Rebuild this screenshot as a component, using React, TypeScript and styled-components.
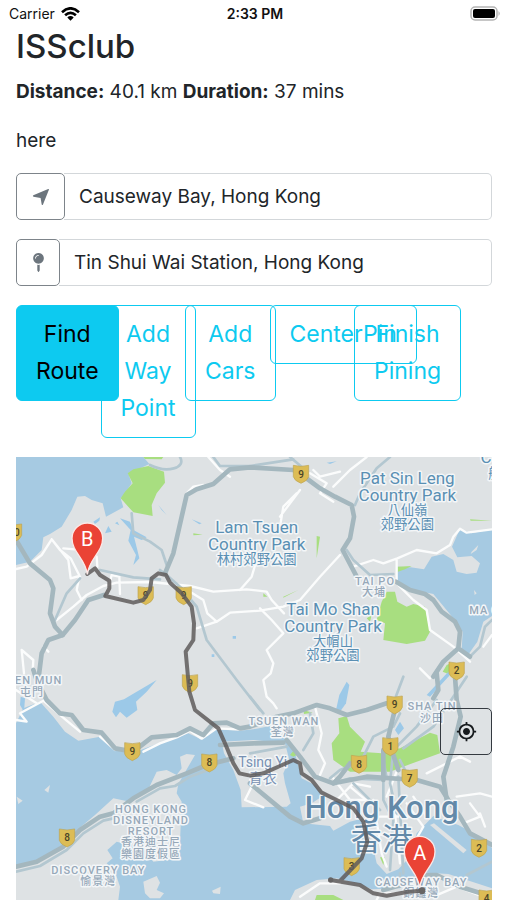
import React from "react";
import styled, { createGlobalStyle } from "styled-components";
import { FaMapPin } from "react-icons/fa";
import { MdMyLocation } from "react-icons/md";

const GlobalStyle = createGlobalStyle`
  * { box-sizing: border-box; }
  body {
    margin: 0;
    background: #fff;
    color: #212529;
    font-family: Inter, "Noto Sans CJK TC", sans-serif;
    font-size: 19px;
    line-height: 29px;
  }
`;

const Page = styled.div`
  min-height: 100vh;
  display: flex;
  flex-direction: column;
`;

const StatusBar = styled.header`
  display: grid;
  grid-template-columns: 1fr auto 1fr;
  align-items: center;
  height: 27px;
  padding: 0 6px 0 9px;
  font-size: 14px;
  line-height: 20px;
  color: #111;
`;

const Carrier = styled.span`
  display: flex;
  align-items: center;
  gap: 6px;
`;

const Clock = styled.time`
  font-weight: 600;
`;

const Battery = styled.svg`
  justify-self: end;
`;

const Content = styled.main`
  flex: 1;
  display: flex;
  flex-direction: column;
  padding: 0 15px 0 16px;
`;

const Title = styled.h1`
  margin: 0 0 12px;
  font-size: 33px;
  line-height: 38px;
  font-weight: 500;
`;

const Line = styled.p<{ $last?: boolean }>`
  margin: 0 0 ${(p) => (p.$last ? 18 : 20)}px;

  b { font-weight: 700; }
`;

const Field = styled.div`
  display: flex;
  height: 47px;
  margin-bottom: 19px;
`;

const FieldButton = styled.button<{ $wide?: boolean }>`
  flex: none;
  display: flex;
  align-items: center;
  justify-content: center;
  width: ${(p) => (p.$wide ? 49 : 44)}px;
  padding: 0;
  border: 1px solid #7d848a;
  border-radius: 5px;
  background: #fff;
  color: #6c757d;
`;

const FieldInput = styled.input`
  flex: 1;
  min-width: 0;
  margin-left: -1px;
  padding: 0 15px;
  border: 1px solid #d3d7da;
  border-left-width: 0;
  border-radius: 0 5px 5px 0;
  background: transparent;
  color: #212529;
  font: inherit;
`;

const Actions = styled.div`
  display: grid;
  grid-template-columns: repeat(6, minmax(0, 1fr));
  align-items: start;
  margin: 0 -15px 19px -16px;
`;

const ActionCell = styled.div`
  padding-left: 16px;
`;

const ActionButton = styled.button<{ $solid?: boolean }>`
  position: relative;
  z-index: ${(p) => (p.$solid ? 1 : 0)};
  display: block;
  width: min-content;
  padding: 10px 19px;
  border: 1px solid #0dcaf0;
  border-radius: 6px;
  background: ${(p) => (p.$solid ? "#0dcaf0" : "transparent")};
  color: ${(p) => (p.$solid ? "#000" : "#0dcaf0")};
  font: inherit;
  font-size: 23px;
  line-height: 37px;
`;

const MapFrame = styled.section`
  position: relative;
  flex: 1;
  display: flex;
  min-height: 443px;
  overflow: hidden;
  background: #dfe2e4;
`;

const MapDrawing = styled.svg`
  flex: 1;
  min-width: 0;
  height: 443px;
  font-family: Roboto, "Noto Sans CJK TC", sans-serif;
`;

const LocateButton = styled.button`
  position: absolute;
  top: 251px;
  right: 0;
  display: flex;
  align-items: center;
  justify-content: center;
  width: 52px;
  height: 47px;
  padding: 0;
  border: 1px solid #343a40;
  border-radius: 5px;
  background: transparent;
  color: #161a1d;
`;

const PlaceName = styled.text`
  text-anchor: middle;
  paint-order: stroke;
  stroke: #f3f6f8;
  stroke-width: 9px;
  stroke-linejoin: round;
`;

const ParkName = styled(PlaceName)`
  fill: #5a8fb3;
  font-size: 51px;
`;

const ParkNameHan = styled(PlaceName)`
  fill: #5a8fb3;
  font-size: 40px;
`;

const TownName = styled(PlaceName)`
  fill: #96a8b8;
  font-size: 33px;
  font-weight: 500;
  letter-spacing: 3px;
`;

const CityName = styled(PlaceName)`
  fill: #6389a8;
  font-size: 93px;
  font-weight: 500;
`;

const CityNameHan = styled(CityName)`
  font-weight: 400;
`;

const IslandName = styled(PlaceName)`
  fill: #7891b3;
  font-size: 42px;
`;

const ShieldNumber = styled.text`
  text-anchor: middle;
  fill: #4b4528;
  font-size: 30px;
  font-weight: 500;
`;

const MarkerLetter = styled.text`
  text-anchor: middle;
  fill: #fff;
  font-size: 60px;
`;

const shields = [
  { x: 903, y: 72, n: "9" },
  { x: 1370, y: 662, n: "2" },
  { x: 437, y: 436, n: "9" },
  { x: 551, y: 436, n: "9" },
  { x: 570, y: 700, n: "9" },
  { x: 397, y: 904, n: "9" },
  { x: 628, y: 938, n: "8" },
  { x: 201, y: 1163, n: "8" },
  { x: 1184, y: 764, n: "9" },
  { x: 1171, y: 889, n: "1" },
  { x: 1077, y: 942, n: "8" },
  { x: 1229, y: 984, n: "7" },
  { x: 1437, y: 1194, n: "2" },
  { x: 1055, y: 1249, n: "3" },
  { x: 1460, y: 1346, n: "4" },
  { x: 42, y: 248, n: "10" },
];

const parks = [
  { x: 1222, y: 102, lines: ["Pat Sin Leng", "Country Park"], han: ["八仙嶺", "郊野公園"] },
  { x: 770, y: 248, lines: ["Lam Tsuen", "Country Park"], han: ["林村郊野公園"] },
  { x: 999, y: 495, lines: ["Tai Mo Shan", "Country Park"], han: ["大帽山", "郊野公園"] },
];

const towns = [
  { x: 1125, y: 404, t: "TAI PO" },
  { x: 1122, y: 438, t: "大埔" },
  { x: 1468, y: 492, t: "MA ON" },
  { x: 92, y: 703, t: "TUEN MUN" },
  { x: 96, y: 738, t: "屯門" },
  { x: 852, y: 824, t: "TSUEN WAN" },
  { x: 848, y: 857, t: "荃灣" },
  { x: 1296, y: 781, t: "SHA TIN" },
  { x: 1296, y: 817, t: "沙田" },
  { x: 453, y: 1088, t: "HONG KONG" },
  { x: 453, y: 1121, t: "DISNEYLAND" },
  { x: 453, y: 1154, t: "RESORT" },
  { x: 453, y: 1188, t: "香港迪士尼" },
  { x: 453, y: 1223, t: "樂園度假區" },
  { x: 295, y: 1273, t: "DISCOVERY BAY" },
  { x: 295, y: 1306, t: "愉景灣" },
  { x: 1264, y: 1308, t: "CAUSEWAY BAY" },
  { x: 1264, y: 1342, t: "銅鑼灣" },
];

const water = [
  "M48 21H430L448 42 410 60 385 70 395 100 375 130 362 145 370 172 318 200 308 160 275 150 255 138 232 140 215 180 185 230 150 252 130 262 125 300 90 335 48 345Z",
  "M48 820L70 775 120 755 160 800 195 845 235 872 300 860 345 900 400 908 470 882 520 868 565 850 600 866 640 838 720 842 760 838 810 828 855 862 885 910 905 985 950 1008 965 1040 935 1060 900 1070 910 1120 990 1128 1000 1142 1050 1115 1090 1105 1120 1195 1130 1240 1160 1272 1195 1258 1230 1220 1250 1150 1300 1098 1330 1110 1375 1125 1440 1160 1476 1195V1350H48Z",
  "M1192 350L1232 352 1272 358 1295 320 1330 312 1360 330 1370 365 1400 372 1430 368 1440 340 1415 318 1372 322 1356 290 1380 236 1415 250 1476 238V498L1450 515 1432 575 1406 612 1385 600 1388 545 1352 495 1300 432 1230 418 1188 392Z",
];

const lakes = [
  "M337 785L345 755 372 748 410 725 470 690 440 725 408 755 412 780 380 803 360 785 348 802Z",
  "M1008 780L1018 735 1040 695 1048 705 1038 760 1020 785Z",
  "M315 250L325 228 335 245ZM345 220L352 215 358 226ZM280 215L300 202 298 212 285 222ZM698 558H708V566H698ZM635 613H643V621H635Z",
  "M390 215L400 240 440 262 425 270 402 260 412 300 418 325 400 345 408 315 385 272 392 240 360 205Z",
  "M62 740L75 745 72 785 60 765Z",
  "M575 208L605 220 598 223ZM475 165L500 195 485 180Z",
  "M980 38L1010 34 990 42Z",
  "M1280 735L1345 665 1350 675 1290 740ZM1185 840L1200 815 1212 835 1195 855Z",
];

const land = [
  "M48 1252L110 1235 180 1195 225 1145 285 1095 340 1045 390 1055 440 1028 470 965 500 960 530 975 545 955 540 920 560 912 585 915 562 955 535 1002 530 1030 545 1055 538 1225 460 1235 430 1195 350 1175 322 1200 338 1225 320 1240 345 1265 360 1310 355 1350H48Z",
  "M665 875L760 870 855 880 868 930 850 970 855 1000 872 1060 860 1070 725 1072 722 1020 700 960 672 910Z",
  "M1476 1315V1350H870L885 1320 950 1290 1010 1285 1080 1302 1115 1318 1200 1315 1220 1285 1280 1268 1345 1272 1400 1290Z",
  "M1290 1125L1302 1120 1400 1200 1390 1210Z",
  "M430 1295L470 1278 480 1298 470 1320 492 1330 480 1345 450 1345 435 1330ZM636 1322L662 1310 660 1332 640 1330ZM133 1020L150 1005 145 1028ZM50 1040L68 1052 55 1062Z",
  "M1415 305L1435 285 1430 300 1412 312ZM1422 420L1430 430 1424 435Z",
];

const greens = [
  "M400 58L445 48 492 65 495 98 470 130 455 165 458 198 400 187 362 145 375 125 398 100 383 70Z",
  "M430 21H490L485 28 435 27Z",
  "M1145 455L1160 425 1185 425 1192 455 1220 470 1240 462 1275 470 1290 545 1275 572 1220 582 1150 570 1155 520 1130 510Z",
  "M1015 805L1040 798 1050 830 1095 875 1082 905 1145 910 1200 895 1290 848 1312 855 1320 910 1250 935 1170 965 1050 965 1000 930 995 880 1018 850Z",
  "M1192 350L1235 348 1215 358 1192 366ZM1328 665L1340 645 1352 640 1345 672Z",
  "M950 258L960 260 950 325ZM850 440L895 420 850 443ZM580 250L608 254 580 256ZM1410 208L1476 212 1412 212ZM870 915L880 903 890 915 880 920ZM950 1335L1000 1335 1030 1350H945ZM1140 1222L1155 1222 1150 1245ZM1100 505L1115 495 1110 515ZM790 430L802 440H790ZM910 780L938 788 912 792Z",
];

const streets = [
  "M48 357L80 350 125 315 155 268 205 330 212 385 238 378M155 268L180 300 212 325 240 380M190 295L225 298M238 380L230 420 245 450",
  "M170 510L220 470 260 435 310 408 350 398 450 396 570 408 640 425 740 418 800 425 815 450 852 490M290 320L292 350M330 395L335 375 358 380 360 432",
  "M720 420L755 380 770 330M570 425L610 450 622 490 650 515 590 535M650 515L690 488 780 482 850 470 900 450 960 380 1020 315M780 475L815 510 850 550 800 600 820 640 812 670 790 690 800 740 820 760 830 775",
  "M890 130L850 170 840 230M900 120L840 200M1000 110L1050 60 1100 21M930 70L980 100 960 130 1000 155M940 60L960 80 1020 65M625 21L660 60 690 80",
  "M560 130L580 110 610 105",
  "M1060 350L1120 330 1150 340 1192 325 1250 300 1310 310 1350 285 1360 260 1380 236 1400 248 1476 238M1190 330L1190 400 1240 450 1280 480 1290 540 1360 590 1410 635",
  "M65 600L100 630 98 665M65 600L72 670M130 590L145 605M48 720L110 760M48 810L80 815 60 790 130 752 200 812 240 845",
  "M300 860L345 900M430 905L480 880 530 862 570 842 605 866 650 835 720 838",
  "M790 970L760 1000 735 1050 790 1072M750 990L780 1005",
  "M945 770L965 850 955 900 975 940 960 975M1190 965L1160 1040M1280 970L1380 920 1410 935M1370 1040L1440 1030 1476 1040M1410 1060L1440 1100 1390 1120M1120 1050L1145 1210 1160 1250M1180 1040L1200 1240M1220 1060L1270 1130 1230 1200M1240 1040L1280 1100M1140 1100H1230M1130 1150L1240 1180M1050 1010L1110 1060M1440 1090L1455 1130",
  "M900 1340L960 1300 1020 1300M1130 1350L1140 1330 1260 1330M1300 1340L1370 1310 1476 1350M1450 590L1476 555M1260 655L1290 685",
  "M1010 1050L1060 1000 1110 1010M1000 985L1050 1050 1110 1050",
];

const minorRoads = [
  "M240 385L200 430 165 510M300 360L400 382 480 388M480 360L500 375 540 410 590 470 620 570 710 690 780 780",
  "M500 345L485 300 450 275 400 250 395 190M540 21C560 55 500 70 450 45M640 21L660 48H750",
  "M750 48L880 28M870 21L910 55M1170 21L1130 55 1080 130 1065 165M1040 300L1060 330 1110 375 1180 372M1410 620L1440 590 1455 530 1476 510",
  "M750 910L860 890M750 740L790 790M930 790L940 850 910 900M1400 680L1340 770 1300 830 1210 895M1210 680L1180 760M1310 750L1250 830 1180 900 1170 1000 1190 1090",
  "M1000 1000L1050 985 1150 990M990 985L1020 960 1060 945M1150 930L1160 985M1200 930L1230 990M1090 920L1120 860 1180 830 1200 790",
  "M1150 985L1150 1050 1180 1110 1170 1260M1195 980L1210 1270M1060 1000L1140 1080M1476 1235L1400 1275M1200 1270V1300",
  "M48 1265L120 1248 200 1200 250 1150 310 1112 340 1105M410 1055L480 1015 525 1008 570 980 630 958",
];

const highways = [
  "M48 270L90 340 150 390 160 415 150 490 165 530 188 555 225 510 265 450 312 435",
  "M115 690L125 610 145 570 188 555",
  "M495 370L520 310 545 200 560 135 590 118 640 102 690 58 750 52 880 60 910 78 960 115 1005 140 1055 165 1062 200 1050 265 1028 300 1070 380",
  "M1188 395L1230 420 1275 432 1300 450 1325 485 1365 515 1380 545 1375 595 1410 620M1375 595L1330 635 1300 680",
  "M100 660L110 690 140 750 180 790 215 795 250 840 305 848 345 895 400 905 455 862 530 855 570 835 610 855 640 820 680 818 720 835 750 830 830 800 880 790 950 765 990 775 1040 795 1100 780 1160 760",
  "M660 885L760 880 850 878M48 1250L110 1235 190 1190 240 1140 300 1100 340 1090 400 1045 470 1005 560 970 620 945 700 925",
  "M750 1000L870 1100 910 1120 960 1105M860 870L900 920 945 980 1000 1000 1100 980 1250 990 1320 1010 1345 1050 1380 1100 1410 1150 1476 1185",
  "M1310 670L1315 720 1300 745M1365 680L1370 750M1182 790L1165 860 1175 900 1195 960M1370 750L1382 800 1360 890 1330 980 1340 1050M1050 940L1020 980 1000 1000M1150 900L1150 990",
  "M1150 1320L1220 1300 1260 1275 1310 1275 1380 1310 1476 1340",
];

const route =
  "M262 372L285 355 300 375 328 392 328 415 316 438 400 458 430 450 450 420 455 385 475 370 498 375 510 398 545 430 575 470 582 520 580 570 557 605 563 670 568 725 585 780 655 835 675 880 700 940 718 970 750 977 790 970 840 948 880 930 900 940 905 970 935 990 965 1028 1010 1050 1060 1075 1090 1115 1102 1175 1085 1225 1020 1293M992 1290L1080 1305 1120 1330 1160 1337 1225 1325 1266 1322";

function Roads({ paths, color, width }: { paths: string[]; color: string; width: number }) {
  return (
    <g fill="none" stroke={color} strokeWidth={width} strokeLinejoin="round" strokeLinecap="round">
      {paths.map((d) => <path key={d} d={d} />)}
    </g>
  );
}

function Shapes({ paths, color }: { paths: string[]; color: string }) {
  return <g fill={color}>{paths.map((d) => <path key={d} d={d} />)}</g>;
}

function Marker({ x, y, letter }: { x: number; y: number; letter: string }) {
  return (
    <g transform={`translate(${x} ${y})`}>
      <path d="M0 108C-6 60-46 42-46 0A46 46 0 0 1 46 0C46 42 6 60 0 108Z" fill="#ea4335" stroke="#fbe9e7" strokeWidth="4" />
      <MarkerLetter y="24">{letter}</MarkerLetter>
    </g>
  );
}

function RouteMap() {
  return (
    <MapDrawing viewBox="48 21 1428 1329" preserveAspectRatio="xMidYMid slice" role="img" aria-label="Route map of Hong Kong">
      <rect x="-1000" y="0" width="4000" height="1400" fill="#dee2e4" />
      <Shapes paths={water} color="#a6cae2" />
      <Shapes paths={land} color="#dee2e4" />
      <Shapes paths={greens} color="#a8de80" />
      <Shapes paths={lakes} color="#9cc9e8" />
      <Roads paths={streets} color="#fbfcfc" width={7} />
      <Roads paths={minorRoads} color="#b3c7d0" width={8} />
      <Roads paths={highways} color="#a4b7be" width={14} />
      {shields.map((s) => (
        <g key={`${s.x}-${s.y}`} transform={`translate(${s.x} ${s.y})`}>
          <path d="M-23-26Q0-20 23-26V8Q20 20 0 28Q-20 20-23 8Z" fill="#dcbc55" stroke="#bda553" strokeWidth="2" />
          <ShieldNumber y="11">{s.n}</ShieldNumber>
        </g>
      ))}
      {towns.map((t) => <TownName key={t.t} x={t.x} y={t.y}>{t.t}</TownName>)}
      {parks.map((p) => (
        <g key={p.lines[0]}>
          {p.lines.map((l, i) => <ParkName key={l} x={p.x} y={p.y + i * 51}>{l}</ParkName>)}
          {p.han.map((l, i) => <ParkNameHan key={l} x={p.x} y={p.y + 43 + (p.lines.length - 1) * 51 + i * 40}>{l}</ParkNameHan>)}
        </g>
      ))}
      <ParkName x="1588" y="40">Country Park</ParkName>
      <ParkNameHan x="1505" y="84">船灣</ParkNameHan>
      <IslandName x="788" y="950">Tsing Yi</IslandName>
      <IslandName x="788" y="998">青衣</IslandName>
      <CityName x="1145" y="1105">Hong Kong</CityName>
      <CityNameHan x="1145" y="1200">香港</CityNameHan>
      <path d={route} fill="none" stroke="#5f5c5c" strokeOpacity="0.85" strokeWidth="12" strokeLinejoin="round" strokeLinecap="round" />
      <circle cx="992" cy="1290" r="8" fill="#666464" />
      <circle cx="1266" cy="1322" r="10" fill="#666464" />
      <Marker x={262} y={265} letter="B" />
      <Marker x={1259} y={1205} letter="A" />
    </MapDrawing>
  );
}

const actions = ["Find Route", "Add Way Point", "Add Cars", "CenterPin", "Finish Pining"];

export default function App() {
  return (
    <>
      <GlobalStyle />
      <Page>
        <StatusBar>
          <Carrier>
            Carrier
            <svg width="19" height="14" viewBox="0 0 19 14" aria-label="Wi-Fi">
              <g fill="none" stroke="#000" strokeWidth="2.6">
                <path d="M1 5.2Q9.5-2.6 18 5.2" />
                <path d="M4.1 8.3Q9.5 3.3 14.9 8.3" />
              </g>
              <path d="M6.3 10.4Q9.5 7.7 12.7 10.4L9.5 13.8Z" />
            </svg>
          </Carrier>
          <Clock>2:33 PM</Clock>
          <Battery width="31" height="15" viewBox="0 0 31 15" aria-label="Battery full">
            <rect x="1" y="1" width="26" height="13" rx="4" fill="#fff" stroke="#b4b4b4" strokeWidth="1.5" />
            <rect x="3" y="3" width="22" height="9" rx="2" />
            <path d="M28.5 5Q31 7.5 28.5 10Z" fill="#b4b4b4" />
          </Battery>
        </StatusBar>
        <Content>
          <Title>ISSclub</Title>
          <Line><b>Distance:</b> 40.1 km <b>Duration:</b> 37 mins</Line>
          <Line $last>here</Line>
          <Field>
            <FieldButton $wide type="button" aria-label="Use current location">
              <svg width="18" height="18" viewBox="0 0 18 18" fill="currentColor">
                <path d="M1.3 7.2 16.2 1Q17.2.7 16.9 1.7L11 16.4Q10.3 17.5 9.7 16.4L8.6 10 1.5 8.7Q.3 7.9 1.3 7.2Z" />
              </svg>
            </FieldButton>
            <FieldInput aria-label="Origin" defaultValue="Causeway Bay, Hong Kong" />
          </Field>
          <Field>
            <FieldButton type="button" aria-label="Pick destination">
              <FaMapPin size={19} />
            </FieldButton>
            <FieldInput aria-label="Destination" defaultValue="Tin Shui Wai Station, Hong Kong" />
          </Field>
          <Actions>
            {actions.map((label, i) => (
              <ActionCell key={label}>
                <ActionButton type="button" $solid={i === 0}>{label}</ActionButton>
              </ActionCell>
            ))}
          </Actions>
          <MapFrame>
            <RouteMap />
            <LocateButton type="button" aria-label="Centre on my location">
              <MdMyLocation size={21} />
            </LocateButton>
          </MapFrame>
        </Content>
      </Page>
    </>
  );
}
